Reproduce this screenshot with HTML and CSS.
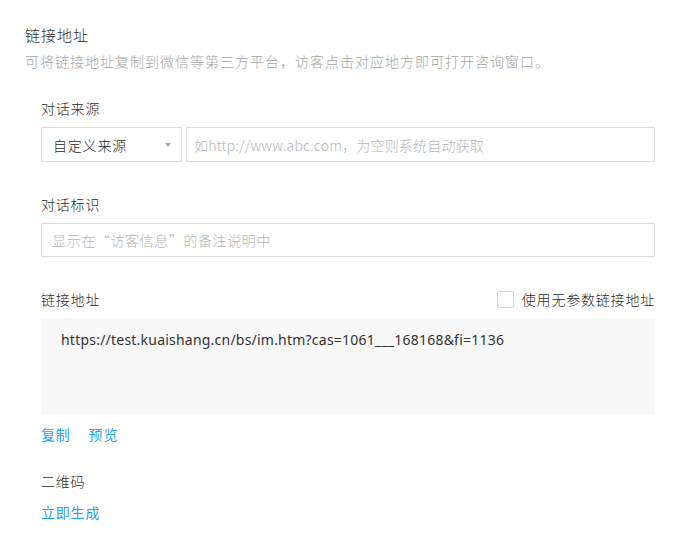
FILE: index.html
```html
<!DOCTYPE html>
<html lang="zh-CN">
<head>
<meta charset="utf-8">
<title>链接地址</title>
<link rel="stylesheet" href="styles.css">
</head>
<body>
<div class="page">
  <div class="title">链接地址</div>
  <div class="desc">可将链接地址复制到微信等第三方平台，访客点击对应地方即可打开咨询窗口。</div>

  <div class="form">
    <div class="field field-first">
      <div class="label">对话来源</div>
      <div class="control-row">
        <div class="select">
          <span class="select-text">自定义来源</span>
          <span class="select-arrow"></span>
        </div>
        <input class="input input-grow" type="text" placeholder="如http://www.abc.com，为空则系统自动获取">
      </div>
    </div>

    <div class="field field-second">
      <div class="label">对话标识</div>
      <div class="control-row">
        <input class="input input-full" type="text" placeholder="显示在“访客信息”的备注说明中">
      </div>
    </div>

    <div class="field field-link">
      <div class="label-row">
        <span class="label">链接地址</span>
        <label class="check">
          <span class="check-box"></span>
          <span class="check-text">使用无参数链接地址</span>
        </label>
      </div>
      <div class="url-box">
        <span class="url-text">https://test.kuaishang.cn/bs/im.htm?cas=1061___168168&amp;fi=1136</span>
      </div>
      <div class="actions">
        <a class="link">复制</a>
        <a class="link">预览</a>
      </div>
    </div>

    <div class="field field-qr">
      <div class="label">二维码</div>
      <div class="actions actions-qr">
        <a class="link">立即生成</a>
      </div>
    </div>
  </div>
</div>
</body>
</html>
```

FILE: styles.css
```css
* {
  box-sizing: border-box;
}

html, body {
  margin: 0;
  padding: 0;
  background: #ffffff;
}

body {
  font-family: "Noto Sans CJK SC", "Noto Sans", sans-serif;
  font-size: 14px;
  font-weight: 300;
  color: #2b2b2b;
}

.page {
  width: 700px;
  padding: 24px 45px 0 25px;
}

.title {
  font-size: 15px;
  line-height: 22px;
  letter-spacing: 1px;
  color: #2b2b2b;
}

.desc {
  margin-top: 4px;
  font-size: 14px;
  line-height: 22px;
  letter-spacing: 1px;
  color: #a3a3a3;
  white-space: nowrap;
}

.form {
  padding-left: 16px;
}

.label {
  font-size: 14px;
  line-height: 22px;
  letter-spacing: 0.8px;
  color: #2b2b2b;
}

.field-first {
  margin-top: 25px;
}

.field-second {
  margin-top: 31px;
}

.field-link {
  margin-top: 31px;
}

.field-qr {
  margin-top: 25px;
}

.control-row {
  display: flex;
  gap: 4px;
  margin-top: 8px;
}

.select {
  width: 141px;
  height: 35px;
  border: 1px solid #dcdcdc;
  display: flex;
  align-items: center;
  justify-content: space-between;
  padding: 0 10px 0 11px;
  flex: none;
}

.select-text {
  font-size: 14px;
  letter-spacing: 0.8px;
  color: #2b2b2b;
}

.select-arrow {
  width: 0;
  height: 0;
  border-left: 3px solid transparent;
  border-right: 3px solid transparent;
  border-top: 4px solid #a8a8a8;
  margin-top: 1px;
}

.input {
  height: 35px;
  border: 1px solid #dcdcdc;
  border-radius: 0;
  padding: 0 7px;
  font-family: "Noto Sans CJK SC", "Noto Sans", sans-serif;
  font-size: 14px;
  font-weight: 300;
  letter-spacing: 0.2px;
  color: #2b2b2b;
  outline: none;
  background: #ffffff;
}

.input::placeholder {
  color: #b4b4b4;
}

.input-grow {
  flex: 1;
  min-width: 0;
}

.input-full {
  width: 100%;
  height: 34px;
  padding-left: 10px;
  letter-spacing: 0.6px;
}

.label-row {
  display: flex;
  align-items: center;
  justify-content: space-between;
  height: 22px;
}

.check {
  display: flex;
  align-items: center;
  gap: 8px;
}

.check-box {
  width: 17px;
  height: 17px;
  border: 1px solid #d6d6d6;
  border-radius: 2px;
  background: #ffffff;
}

.check-text {
  font-size: 14px;
  letter-spacing: 0.8px;
  color: #2b2b2b;
  line-height: 22px;
}

.url-box {
  margin-top: 8px;
  height: 96px;
  background: #f8f8f8;
  padding: 11px 20px 0 20px;
}

.url-text {
  display: block;
  font-family: "Noto Sans", "Noto Sans CJK SC", sans-serif;
  font-size: 14px;
  font-weight: 400;
  line-height: 22px;
  letter-spacing: 0.22px;
  color: #333333;
}

.actions {
  display: flex;
  gap: 18px;
  margin-top: 9px;
}

.actions-qr {
  margin-top: 9px;
}

.link {
  font-size: 14px;
  font-weight: 400;
  line-height: 22px;
  letter-spacing: 0.8px;
  color: #1fa0f5;
  cursor: pointer;
  text-decoration: none;
}
```
